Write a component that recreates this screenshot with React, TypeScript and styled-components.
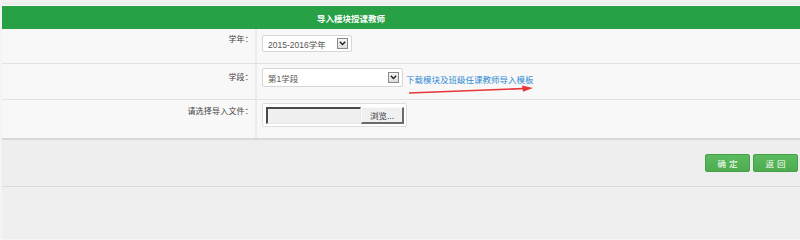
import styled, { createGlobalStyle } from "styled-components";

const Global = createGlobalStyle`
    html, body {
        margin:0;
        padding:0;
        background:#efefef;
    }
    body {
        font-family:"Liberation Sans", "Noto Sans CJK SC", sans-serif;
        font-size:8.5px;
        color:#333;
    }
`;

const Page = styled.div`
    width:800px;
    height:240px;
    display:flex;
    flex-direction:column;
    background:#eeeeee;
    border-left:2px solid #f4f4f4;
    box-sizing:border-box;
    overflow:hidden;
`;
const TopStrip = styled.div`
    height:3px;
    background:#ededed;
    border-bottom:1px solid #f6f6f6;
    border-top:2px solid #f2f2f2;
`;
const Header = styled.div`
    height:23px;
    background:#28a046;
    color:#fff;
    display:flex;
    align-items:center;
    justify-content:center;
    font-weight:bold;
    font-size:8.5px;
    padding-right:100px;
`;
const Form = styled.div`
    background:#f8f8f8;
    border-bottom:2px solid #d8d8d8;
`;
const Row = styled.div<{ h: number }>`
    display:grid;
    grid-template-columns:255px 1fr;
    height:${(p) => p.h}px;
    border-bottom:1px solid #e2e2e2;
    &:last-child{
        border-bottom:none;
    }
`;
const Label = styled.div<{ top: number }>`
    border-right:2px solid #ebebeb;
    text-align:right;
    padding-right:2px;
    padding-top:${(p) => p.top}px;
    color:#444;
    font-size:8px;
    letter-spacing:0.2px;
`;
const Field = styled.div<{ top: number }>`
    display:flex;
    align-items:flex-start;
    padding-left:5px;
    padding-top:${(p) => p.top}px;
    position:relative;
`;
const SelectBox = styled.div<{ w: number; h: number }>`
    width:${(p) => p.w}px;
    height:${(p) => p.h}px;
    box-sizing:border-box;
    background:#fff;
    border:1px solid #d6d6d6;
    border-radius:2px;
    display:flex;
    align-items:center;
    justify-content:space-between;
    padding:0 3px 0 5px;
    color:#555;
`;
const ArrowBox = styled.div`
    width:11px;
    height:11px;
    box-sizing:border-box;
    border:1px solid #8a8a8a;
    background:linear-gradient(#f6f6f6, #dcdcdc);
    display:flex;
    align-items:center;
    justify-content:center;
`;
const Link = styled.a`
    color:#2f8ad3;
    text-decoration:none;
    margin-left:3px;
    margin-top:5px;
    cursor:pointer;
`;
const Arrow = styled.svg`
    position:absolute;
    left:152px;
    top:21px;
`;
const FileWrap = styled.div`
    width:145px;
    height:24px;
    box-sizing:border-box;
    background:#fff;
    border:1px solid #dedede;
    border-radius:2px;
    display:flex;
    align-items:center;
    padding-left:3px;
`;
const FileText = styled.div`
    width:95px;
    height:17px;
    box-sizing:border-box;
    background:#f0f0f0;
    border-top:2px solid #4a4a4a;
    border-left:2px solid #4a4a4a;
    border-right:1px solid #e8e8e8;
    border-bottom:1px solid #e8e8e8;
`;
const Browse = styled.div`
    width:43px;
    height:17px;
    box-sizing:border-box;
    background:#f0f0f0;
    border-top:1px solid #fafafa;
    border-left:1px solid #fafafa;
    border-right:2px solid #6a6a6a;
    border-bottom:2px solid #6a6a6a;
    display:flex;
    align-items:center;
    justify-content:center;
    color:#333;
`;
const Actions = styled.div`
    height:45px;
    display:flex;
    justify-content:flex-end;
    align-items:center;
    gap:3px;
    padding-right:2px;
    border-bottom:1px solid #dadada;
    padding-bottom:1px;
`;
const Button = styled.button`
    width:45px;
    height:18px;
    border:1px solid #43a047;
    border-radius:2px;
    background:linear-gradient(#5dbb5f, #4cac4e);
    color:#fff;
    font-family:"Liberation Sans", "Noto Sans CJK SC", sans-serif;
    font-size:8.5px;
    letter-spacing:3px;
    padding:0 0 0 3px;
    cursor:pointer;
`;
const Rest = styled.div`
    flex:1;
    background:#efefef;
    border-bottom:1px solid #f6f6f6;
`;

const Chevron = () => (
    <svg width="7" height="5" viewBox="0 0 7 5">
        <path d="M0.8 0.8 L3.5 3.6 L6.2 0.8" fill="none" stroke="#222" strokeWidth="1.4" />
    </svg>
);

const App = () => {
    return (
        <Page>
            <Global />
            <TopStrip />
            <Header>导入模块授课教师</Header>
            <Form>
                <Row h={34}>
                    <Label top={4}>学年：</Label>
                    <Field top={6}>
                        <SelectBox w={90} h={17}>
                            <span>2015-2016学年</span>
                            <ArrowBox><Chevron /></ArrowBox>
                        </SelectBox>
                    </Field>
                </Row>
                <Row h={35}>
                    <Label top={7}>学段：</Label>
                    <Field top={4}>
                        <SelectBox w={141} h={19}>
                            <span>第1学段</span>
                            <ArrowBox><Chevron /></ArrowBox>
                        </SelectBox>
                        <Link>下载模块及班级任课教师导入模板</Link>
                        <Arrow width="126" height="10" viewBox="0 0 126 10">
                            <path d="M0 8 L116 3.5" stroke="#e8353a" strokeWidth="1.6" fill="none" />
                            <path d="M113 0.6 L124 3 L114 6.8 Z" fill="#e8353a" />
                        </Arrow>
                    </Field>
                </Row>
                <Row h={38}>
                    <Label top={5}>请选择导入文件：</Label>
                    <Field top={3}>
                        <FileWrap>
                            <FileText />
                            <Browse>浏览...</Browse>
                        </FileWrap>
                    </Field>
                </Row>
            </Form>
            <Actions>
                <Button>确定</Button>
                <Button>返回</Button>
            </Actions>
            <Rest />
        </Page>
    );
};

export default App;
